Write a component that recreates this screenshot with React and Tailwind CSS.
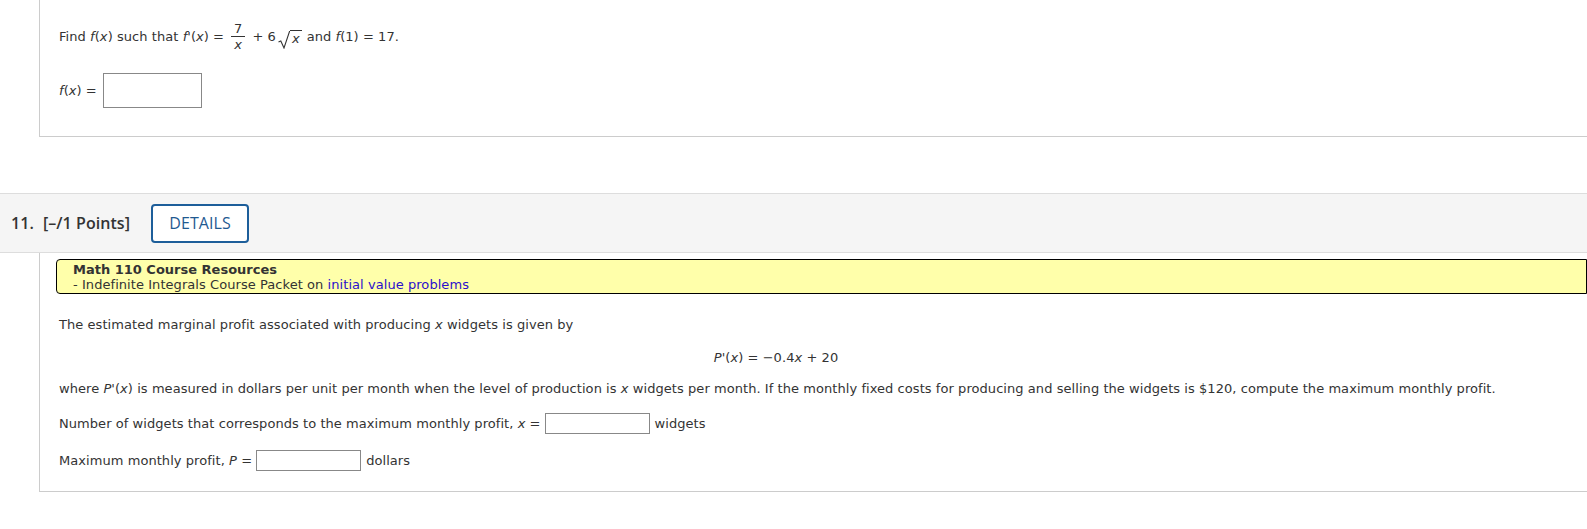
import React from 'react'

const V = ({ children }) => <i className="italic">{children}</i>

function Fraction({ num, den }) {
  return (
    <span className="inline-flex flex-col items-center align-middle mx-[7px] relative -top-[1px]">
      <span className="leading-[15px] px-[3px] border-b border-[#333]">{num}</span>
      <span className="leading-[15px] px-[3px]">{den}</span>
    </span>
  )
}

function Sqrt({ children }) {
  return (
    <span className="inline-flex items-end align-baseline ml-[2px]">
      <svg width="12" height="18" viewBox="0 0 12 18" className="relative top-[3px]">
        <path d="M0.5 11 L2.8 10 L6 17 L11.5 0.5 L12 0.5" stroke="#333" strokeWidth="1.1" fill="none" />
      </svg>
      <span className="border-t border-[#333] leading-[15px] px-[2px]">{children}</span>
    </span>
  )
}

function Answer({ className }) {
  return <span className={`inline-block bg-white border border-[#888] align-middle ${className}`} />
}

export default function App() {
  return (
    <div className="bg-white min-h-[529px] w-[1587px] overflow-hidden font-['DejaVu_Sans','Liberation_Sans',sans-serif] text-[13px] tracking-[0.06px] text-[#333]">
      {/* previous question card */}
      <div className="ml-[39px] h-[137px] border-l border-b border-[#ccc] pl-[19px] pt-[19px]">
        <div className="flex items-center h-[36px]">
          <span>
            Find <V>f</V>(<V>x</V>) such that <V>f</V>'(<V>x</V>) =
          </span>
          <Fraction num="7" den={<V>x</V>} />
          <span>+ 6</span>
          <Sqrt><V>x</V></Sqrt>
          <span className="ml-[5px]">
            and <V>f</V>(1) = 17.
          </span>
        </div>
        <div className="flex items-center mt-[18px]">
          <span className="mr-[6px]">
            <V>f</V>(<V>x</V>) =
          </span>
          <Answer className="w-[99px] h-[35px]" />
        </div>
      </div>

      <div className="h-[56px]" />

      {/* question header */}
      <div className="h-[60px] bg-[#f5f5f5] border-t border-b border-[#ddd] flex items-center font-['Open_Sans',sans-serif] text-[16px] font-semibold text-[#333]">
        <span className="ml-[11px]">11.</span>
        <span className="ml-[9px]">[–/1 Points]</span>
        <button className="ml-[21px] w-[98px] h-[39px] border-2 border-[#1d5e9a] rounded-[4px] bg-white text-[#1f5a91] font-medium text-[16px]">
          DETAILS
        </button>
      </div>

      {/* question body */}
      <div className="ml-[39px] h-[239px] border-l border-b border-[#ccc] pt-[6px]">
        <div className="ml-[16px] h-[35px] bg-[#ffffaa] border border-black rounded-l-[4px] pl-[16px] pt-[2px] leading-[15px]">
          <div className="font-bold tracking-normal">Math 110 Course Resources</div>
          <div>
            - Indefinite Integrals Course Packet on <span className="text-[#2a0fcc]">initial value problems</span>
          </div>
        </div>

        <div className="pl-[19px]">
          <p className="mt-[23px] leading-[16px]">
            The estimated marginal profit associated with producing <V>x</V> widgets is given by
          </p>
          <p className="w-[1434px] text-center mt-[17px] leading-[16px]">
            <V>P</V>'(<V>x</V>) = −0.4<V>x</V> + 20
          </p>
          <p className="mt-[15px] leading-[16px]">
            where <V>P</V>'(<V>x</V>) is measured in dollars per unit per month when the level of production is <V>x</V> widgets per month. If the monthly fixed costs for producing and selling the widgets is $120, compute the maximum monthly profit.
          </p>
          <div className="flex items-center mt-[16px]">
            <span>
              Number of widgets that corresponds to the maximum monthly profit, <V>x</V> =
            </span>
            <Answer className="ml-[4px] w-[105px] h-[21px]" />
            <span className="ml-[5px]">widgets</span>
          </div>
          <div className="flex items-center mt-[16px]">
            <span>
              Maximum monthly profit, <V>P</V> =
            </span>
            <Answer className="ml-[4px] w-[105px] h-[21px]" />
            <span className="ml-[5px]">dollars</span>
          </div>
        </div>
      </div>
    </div>
  )
}
